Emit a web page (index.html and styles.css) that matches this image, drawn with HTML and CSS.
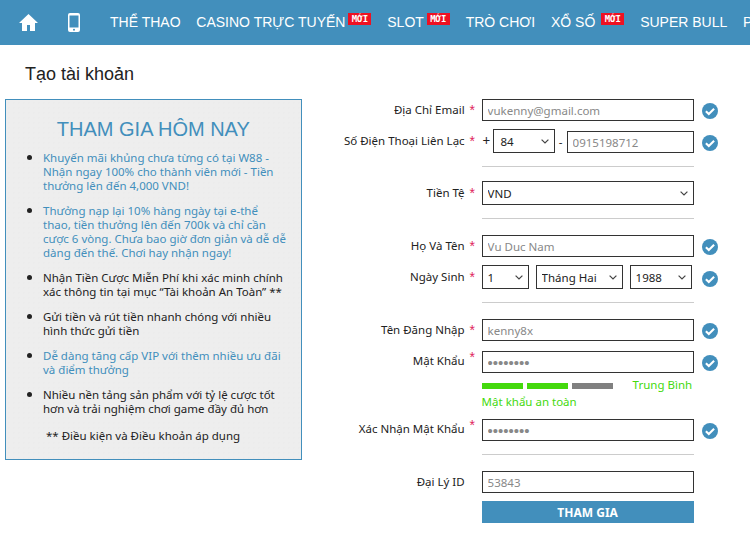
FILE: index.html

```html
<!DOCTYPE html>
<html lang="vi">
<head>
  <meta charset="UTF-8">
  <title>Tạo tài khoản</title>
  <link rel="stylesheet" href="styles.css">
</head>
<body>

<svg class="icon-defs" width="0" height="0">
  <symbol id="check" viewBox="0 0 16 16">
    <circle cx="8" cy="8" r="8" fill="#428fbc"/>
    <path d="M3.9 8.2l2.9 2.8 5.3-5.2" fill="none" stroke="#fff" stroke-width="2.1"/>
  </symbol>
</svg>

<nav class="topnav">
  <a class="nav-icon" href="#">
    <svg width="19" height="17" viewBox="0 0 19 17"><path d="M9.500 0L19 9h-3v8h-5v-6H8v6H3V9H0z" fill="#fff"/></svg>
  </a>
  <a class="nav-icon" href="#">
    <svg width="12" height="19" viewBox="0 0 12 19"><path fill-rule="evenodd" d="M2 0h8a2 2 0 0 1 2 2v15a2 2 0 0 1-2 2H2a2 2 0 0 1-2-2V2a2 2 0 0 1 2-2zM1.500 2.500v12h9v-12zM6 15.700a1 1 0 1 0 0 2 1 1 0 0 0 0-2z" fill="#fff"/></svg>
  </a>
  <a class="nav-link" href="#">THỂ THAO</a>
  <a class="nav-link" href="#">CASINO TRỰC TUYẾN<span class="badge">MỚI</span></a>
  <a class="nav-link" href="#">SLOT<span class="badge">MỚI</span></a>
  <a class="nav-link" href="#">TRÒ CHƠI</a>
  <a class="nav-link" href="#">XỔ SỐ<span class="badge badge-far">MỚI</span></a>
  <a class="nav-link" href="#">SUPER BULL</a>
  <a class="nav-link" href="#">P</a>
</nav>

<h1 class="page-title">Tạo tài khoản</h1>

<div class="content">
  <aside class="promo">
    <h2>THAM GIA HÔM NAY</h2>
    <ul>
      <li class="blue">Khuyến mãi khủng chưa từng có tại W88 - Nhận ngay 100% cho thành viên mới - Tiền thưởng lên đến 4,000 VND!</li>
      <li class="blue">Thưởng nạp lại 10% hàng ngày tại e-thể thao, tiền thưởng lên đến 700k và chỉ cần cược 6 vòng. Chưa bao giờ đơn giản và dễ dễ dàng đến thế. Chơi hay nhận ngay!</li>
      <li>Nhận Tiền Cược Miễn Phí khi xác minh chính xác thông tin tại mục “Tài khoản An Toàn” **</li>
      <li>Gửi tiền và rút tiền nhanh chóng với nhiều hình thức gửi tiền</li>
      <li class="blue">Dễ dàng tăng cấp VIP với thêm nhiều ưu đãi và điểm thưởng</li>
      <li>Nhiều nền tảng sản phẩm với tỷ lệ cược tốt hơn và trải nghiệm chơi game đầy đủ hơn</li>
    </ul>
    <p class="terms">** Điều kiện và Điều khoản áp dụng</p>
  </aside>

  <form class="signup">
    <div class="row">
      <label class="lbl">Địa Chỉ Email</label><span class="req">*</span>
      <div class="field"><input type="text" value="vukenny@gmail.com"></div>
      <svg class="ok"><use href="#check"/></svg>
    </div>
    <div class="row">
      <label class="lbl">Số Điện Thoại Liên Lạc</label><span class="req">*</span>
      <div class="field phone">
        <span class="plus">+</span>
        <select class="sel-code"><option>84</option></select>
        <span class="dash">-</span>
        <input class="phone-num" type="text" value="0915198712">
      </div>
      <svg class="ok"><use href="#check"/></svg>
    </div>
    <hr class="divider divider-tight">
    <div class="row">
      <label class="lbl">Tiền Tệ</label><span class="req">*</span>
      <div class="field"><select><option>VND</option></select></div>
    </div>
    <hr class="divider">
    <div class="row">
      <label class="lbl">Họ Và Tên</label><span class="req">*</span>
      <div class="field"><input type="text" value="Vu Duc Nam"></div>
      <svg class="ok"><use href="#check"/></svg>
    </div>
    <div class="row">
      <label class="lbl">Ngày Sinh</label><span class="req">*</span>
      <div class="field dob">
        <select class="sel-day"><option>1</option></select>
        <select class="sel-month"><option>Tháng Hai</option></select>
        <select class="sel-year"><option>1988</option></select>
      </div>
      <svg class="ok"><use href="#check"/></svg>
    </div>
    <hr class="divider">
    <div class="row row-wide">
      <label class="lbl">Tên Đăng Nhập</label><span class="req">*</span>
      <div class="field"><input type="text" value="kenny8x"></div>
      <svg class="ok"><use href="#check"/></svg>
    </div>
    <div class="row row-wide row-raised">
      <label class="lbl">Mật Khẩu</label><span class="req">*</span>
      <div class="field"><input class="secret" type="password" value="kenny888"></div>
      <svg class="ok"><use href="#check"/></svg>
    </div>
    <div class="strength">
      <div class="strength-top">
        <span class="bar on"></span><span class="bar on"></span><span class="bar"></span>
        <span class="strength-label">Trung Bình</span>
      </div>
      <div class="strength-note">Mật khẩu an toàn</div>
    </div>
    <div class="row row-raised">
      <label class="lbl">Xác Nhận Mật Khẩu</label><span class="req">*</span>
      <div class="field"><input class="secret" type="password" value="kenny888"></div>
      <svg class="ok"><use href="#check"/></svg>
    </div>
    <hr class="divider">
    <div class="row">
      <label class="lbl">Đại Lý ID</label><span class="req"></span>
      <div class="field"><input type="text" value="53843"></div>
    </div>
    <div class="row">
      <span class="lbl"></span><span class="req"></span>
      <div class="field"><button class="submit" type="button">THAM GIA</button></div>
    </div>
  </form>
</div>

</body>
</html>
```

FILE: styles.css

```css
body {
  margin: 0;
  padding: 0;
  font-family: "Noto Sans", Tahoma, sans-serif;
  font-size: 11.5px;
  color: #222;
  background: #fff;
  overflow: hidden;
}

.icon-defs {
  position: absolute;
}

/* top bar */
.topnav {
  display: flex;
  align-items: center;
  height: 45px;
  padding-left: 19px;
  background: #428fbc;
  overflow: hidden;
  white-space: nowrap;
  font-family: "Liberation Sans", Arial, sans-serif;
}

.nav-icon {
  display: flex;
  margin-right: 30px;
}

.nav-link {
  display: flex;
  color: #fff;
  font-size: 14px;
  line-height: 45px;
  text-decoration: none;
  margin-right: 15.8px;
}

.badge {
  align-self: flex-start;
  margin: 13px 0 0 3px;
  width: 23px;
  height: 12px;
  background: #ee1122;
  color: #fff;
  font-family: "DejaVu Sans Mono", monospace;
  font-size: 9px;
  font-weight: bold;
  line-height: 12px;
  text-align: center;
}

.badge-far {
  margin-left: 6px;
}

.page-title {
  margin: 0;
  padding: 19px 0 0 25px;
  height: 35px;
  font-family: "Liberation Sans", Arial, sans-serif;
  font-size: 18px;
  font-weight: normal;
  line-height: 21px;
  color: #222;
}

.content {
  display: flex;
}

/* left box */
.promo {
  box-sizing: border-box;
  width: 297px;
  height: 361px;
  margin-left: 5px;
  padding: 18px 14.5px 0 0;
  border: 1px solid #428fbc;
  background-color: #eee;
  background-image: radial-gradient(#ececec 1px, transparent 1px);
  background-size: 5px 5px;
}

.promo h2 {
  margin: 0 0 9px;
  padding-left: 14.5px;
  font-family: "Liberation Sans", Arial, sans-serif;
  font-size: 20px;
  font-weight: normal;
  line-height: 23px;
  text-align: center;
  color: #428fbc;
}

.promo ul {
  margin: 0;
  padding: 0 0 0 37px;
}

.promo li {
  margin-bottom: 10px;
  line-height: 14px;
}

.promo li::marker {
  color: #222;
  font-size: 13px;
}

.promo li.blue {
  color: #428fbc;
}

.terms {
  margin: 0;
  padding: 3px 0 0 40px;
  line-height: 14px;
}

/* form */
.signup {
  width: 448px;
  margin-left: 1px;
}

.row {
  display: flex;
  margin-bottom: 8px;
}

.row-wide {
  margin-bottom: 10px;
}

.lbl {
  width: 162px;
  margin-bottom: 2px;
  text-align: right;
  align-self: center;
  white-space: nowrap;
}

.row-raised .lbl {
  position: relative;
  top: -1px;
}

.req {
  width: 17px;
  padding-left: 5px;
  box-sizing: border-box;
  align-self: center;
  color: #e0245e;
  font-family: "Liberation Sans", Arial, sans-serif;
  font-size: 14px;
}

.row-raised .req {
  position: relative;
  top: -5px;
}

.field {
  width: 212px;
}

.field input,
.field select {
  display: block;
  box-sizing: border-box;
  width: 100%;
  height: 22px;
  padding: 0 5px;
  border: 1px solid #333;
  border-radius: 0;
  background: #fff;
  font-family: inherit;
  font-size: 11.5px;
}

.field input {
  color: #888;
}

.field .secret {
  font-family: "Liberation Sans", Arial, sans-serif;
  font-size: 15px;
}

.field select {
  height: 24px;
  color: #222;
  appearance: none;
  background: #fff url("data:image/svg+xml,%3Csvg xmlns='http://www.w3.org/2000/svg' width='8' height='5'%3E%3Cpath d='M.6.6L4 4l3.400-3.400' fill='none' stroke='%23444' stroke-width='1.200'/%3E%3C/svg%3E") no-repeat right 5px center;
}

.ok {
  width: 16px;
  height: 16px;
  align-self: flex-end;
  margin: 0 0 2px 8px;
}

.phone,
.dob {
  display: flex;
  align-items: flex-end;
}

.plus {
  width: 12px;
  padding-left: 1px;
  box-sizing: border-box;
  align-self: center;
  font-size: 13.5px;
}

.dash {
  width: 12px;
  text-align: center;
  align-self: center;
}

.field .sel-code {
  width: 62px;
  padding-left: 6px;
}

.field .phone-num {
  width: 127px;
  flex: none;
}

.dob {
  gap: 7px;
}

.field .sel-day {
  width: 47px;
}

.field .sel-month {
  width: 87px;
}

.field .sel-year {
  width: 62px;
}

.divider {
  width: 212px;
  height: 1px;
  margin: 13px 0 16px 179px;
  border: 0;
  background: #ccc;
}

.divider-tight {
  margin-bottom: 14px;
}

/* password strength */
.strength {
  height: 36px;
  margin-left: 179px;
  color: #44d90d;
}

.strength-top {
  display: flex;
  gap: 4px;
  height: 6px;
}

.bar {
  width: 41px;
  height: 6px;
  background: #808080;
}

.bar.on {
  background: #44d90d;
}

.strength-label {
  margin-left: 16px;
  line-height: 4px;
}

.strength-note {
  margin-top: 6px;
  line-height: 14px;
}

.submit {
  display: block;
  width: 100%;
  height: 22px;
  padding: 0;
  border: 0;
  background: #428fbc;
  color: #fff;
  font-family: inherit;
  font-size: 12px;
  font-weight: bold;
}
```
